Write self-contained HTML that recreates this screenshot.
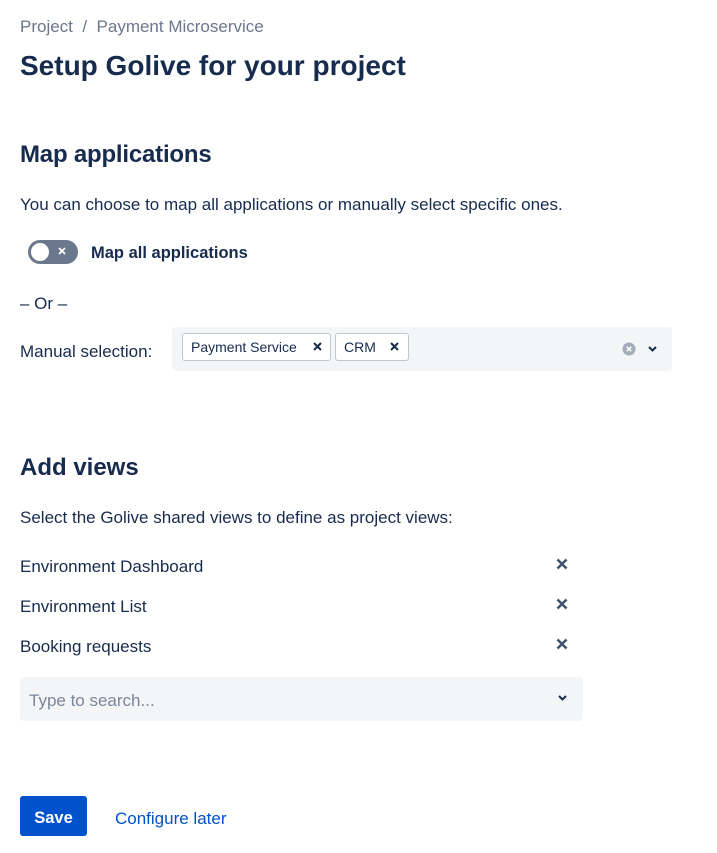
<!DOCTYPE html>
<html><head><meta charset="utf-8"><style>
body{margin:0;width:717px;height:853px;background:#fff;font-family:"Liberation Sans",sans-serif;color:#172B4D;position:relative;overflow:hidden}
.a{position:absolute;white-space:nowrap;line-height:1}
.x{position:absolute}
</style></head><body>
<div class="a" style="left:20px;top:18px;font-size:17px;color:#6B778C">Project&nbsp; / &nbsp;Payment Microservice</div>
<div class="a" style="left:20px;top:52px;font-size:28px;font-weight:bold;color:#172B4D">Setup Golive for your project</div>
<div class="a" style="left:20px;top:143px;font-size:24px;font-weight:bold;letter-spacing:-0.2px">Map applications</div>
<div class="a" style="left:20px;top:196px;font-size:17px">You can choose to map all applications or manually select specific ones.</div>
<div class="x" style="left:28px;top:240px;width:50px;height:24px;border-radius:12px;background:#6B778C"></div>
<div class="x" style="left:31px;top:243px;width:18px;height:18px;border-radius:9px;background:#fff"></div>
<svg class="x" style="left:57px;top:246px" width="10" height="10" viewBox="0 0 10 10"><path d="M2 2L8 8M8 2L2 8" stroke="#fff" stroke-width="1.8"/></svg>
<div class="a" style="left:91px;top:245px;font-size:16.5px;font-weight:bold">Map all applications</div>
<div class="a" style="left:20px;top:295px;font-size:17px">– Or –</div>
<div class="a" style="left:20px;top:343px;font-size:17px">Manual selection:</div>
<div class="x" style="left:172px;top:327px;width:500px;height:44px;border-radius:4px;background:#F4F5F7"></div>
<div class="x" style="left:182px;top:333px;width:147px;height:26px;border:1px solid #C1C7D0;border-radius:3px;background:#fff"></div>
<div class="a" style="left:191px;top:340px;font-size:14px">Payment Service</div>
<svg class="x" style="left:313px;top:342px" width="9" height="9" viewBox="0 0 9 9"><path d="M1 1L8 8M8 1L1 8" stroke="#172B4D" stroke-width="2"/></svg>
<div class="x" style="left:335px;top:333px;width:72px;height:26px;border:1px solid #C1C7D0;border-radius:3px;background:#fff"></div>
<div class="a" style="left:344px;top:340px;font-size:14px">CRM</div>
<svg class="x" style="left:390px;top:342px" width="9" height="9" viewBox="0 0 9 9"><path d="M1 1L8 8M8 1L1 8" stroke="#172B4D" stroke-width="2"/></svg>
<svg class="x" style="left:622px;top:342px" width="14" height="14" viewBox="0 0 14 14"><circle cx="7" cy="7" r="6.5" fill="#A5ADBA"/><path d="M4.8 4.8L9.2 9.2M9.2 4.8L4.8 9.2" stroke="#fff" stroke-width="1.6"/></svg>
<svg class="x" style="left:647px;top:345px" width="11" height="8" viewBox="0 0 11 8"><path d="M2 2L5.5 5.5L9 2" stroke="#172B4D" stroke-width="2" fill="none"/></svg>
<div class="a" style="left:20px;top:456px;font-size:24px;font-weight:bold">Add views</div>
<div class="a" style="left:20px;top:509px;font-size:17px">Select the Golive shared views to define as project views:</div>
<div class="a" style="left:20px;top:558px;font-size:17px">Environment Dashboard</div>
<div class="a" style="left:20px;top:598px;font-size:17px">Environment List</div>
<div class="a" style="left:20px;top:638px;font-size:17px">Booking requests</div>
<svg class="x" style="left:556px;top:558px" width="12" height="12" viewBox="0 0 12 12"><path d="M1.5 1.5L10.5 10.5M10.5 1.5L1.5 10.5" stroke="#42526E" stroke-width="2.6"/></svg>
<svg class="x" style="left:556px;top:598px" width="12" height="12" viewBox="0 0 12 12"><path d="M1.5 1.5L10.5 10.5M10.5 1.5L1.5 10.5" stroke="#42526E" stroke-width="2.6"/></svg>
<svg class="x" style="left:556px;top:638px" width="12" height="12" viewBox="0 0 12 12"><path d="M1.5 1.5L10.5 10.5M10.5 1.5L1.5 10.5" stroke="#42526E" stroke-width="2.6"/></svg>
<div class="x" style="left:20px;top:677px;width:563px;height:44px;border-radius:4px;background:#F4F5F7"></div>
<div class="a" style="left:29px;top:692px;font-size:17px;color:#7A869A">Type to search...</div>
<svg class="x" style="left:557px;top:694px" width="11" height="8" viewBox="0 0 11 8"><path d="M2 2L5.5 5.5L9 2" stroke="#172B4D" stroke-width="2" fill="none"/></svg>
<div class="x" style="left:20px;top:796px;width:67px;height:40px;border-radius:3px;background:#0052CC"></div>
<div class="a" style="left:20px;top:810px;width:67px;text-align:center;font-size:16.5px;font-weight:bold;color:#fff">Save</div>
<div class="a" style="left:115px;top:810px;font-size:17px;color:#0052CC">Configure later</div>
</body></html>
